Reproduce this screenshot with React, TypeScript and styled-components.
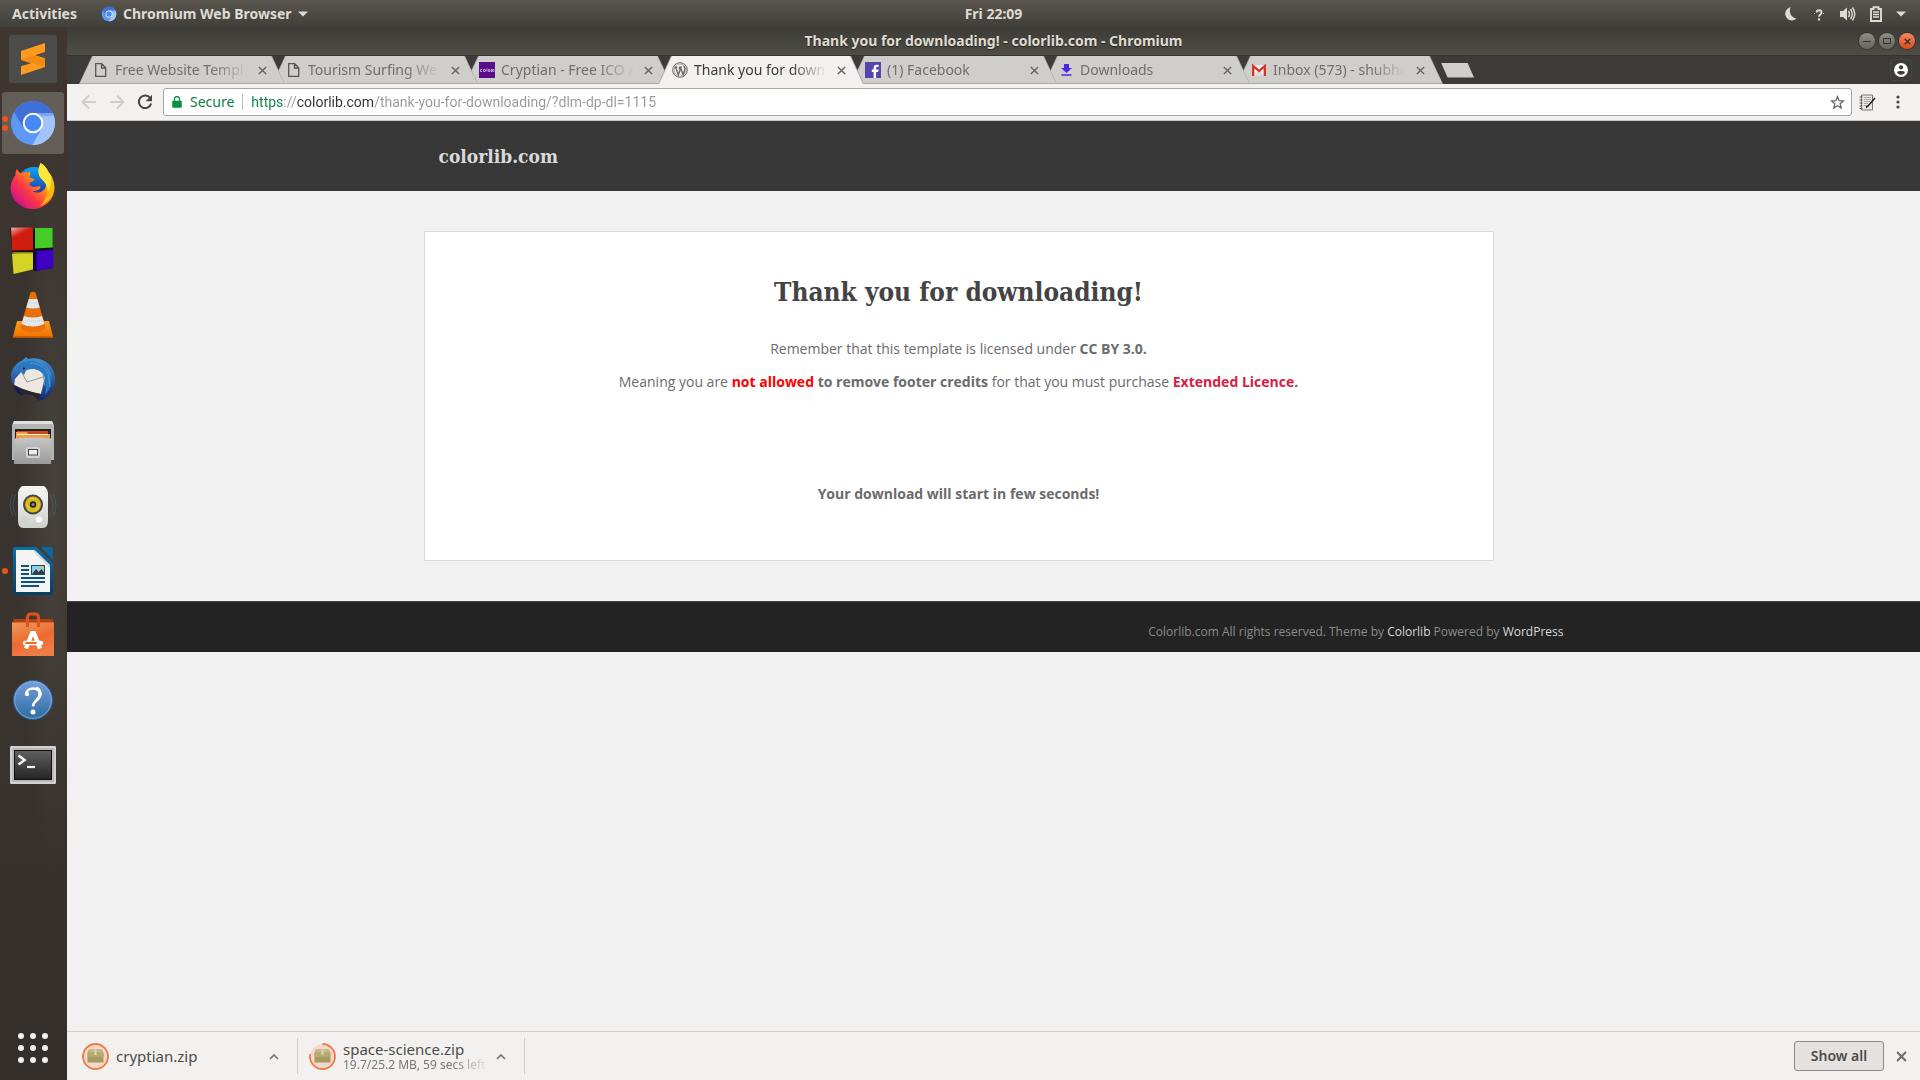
import React from "react";
import styled, { createGlobalStyle } from "styled-components";

const ui = `"Noto Sans", "Open Sans", "DejaVu Sans", sans-serif`;
const body = `"Open Sans", "Noto Sans", sans-serif`;
const slab = `"Roboto Slab", "DejaVu Serif Condensed", "DejaVu Serif", serif`;

const GlobalStyle = createGlobalStyle`
  * { box-sizing: border-box; }
  body { margin: 0; background: #f1f1f1; font-family: ${ui}; }
  button { font: inherit; color: inherit; padding: 0; border: 0; background: none; cursor: pointer; }
  a { text-decoration: none; }
  svg { display: block; flex: none; }
`;

const Desktop = styled.div`
  display: flex;
  flex-direction: column;
  min-height: 100vh;
`;

/* ---------- top panel ---------- */
const Panel = styled.header`
  display: grid;
  grid-template-columns: 1fr auto 1fr;
  align-items: center;
  height: 27px;
  padding-left: 67px;
  background: linear-gradient(#5a564e, #403f3a);
  color: #dfdbd2;
  font-size: 14px;
  font-weight: 700;
  line-height: 20px;
  text-shadow: 0 1px 1px rgba(0, 0, 0, 0.5);
`;
const PanelLeft = styled.div`
  display: flex;
  align-items: center;
  gap: 24px;
  margin-left: -55px;
`;
const PanelButton = styled.button`
  display: flex;
  align-items: center;
  gap: 6px;
  white-space: nowrap;
`;
const PanelRight = styled.div`
  display: flex;
  align-items: center;
  justify-content: flex-end;
  gap: 12px;
  margin-right: 14px;
`;

/* ---------- dock ---------- */
const Workspace = styled.div`
  display: flex;
  flex: 1;
`;
const Dock = styled.nav`
  display: flex;
  flex-direction: column;
  flex: none;
  width: 67px;
  background:
    radial-gradient(ellipse at 80% 45%, rgba(110, 110, 95, 0.25), transparent 45%),
    linear-gradient(#40362f, #38332f 30%, #3a342f 60%, #342f2b);
`;
const DockItem = styled.button<{ $active?: boolean }>`
  display: flex;
  align-items: center;
  height: 62px;
  width: 62px;
  margin: 1px 2px;
  padding: 0 0 0 7px;
  border-radius: 3px;
  position: relative;
  background: ${(p) => (p.$active ? "rgba(255,255,255,0.2)" : "none")};
`;
const AppsButton = styled(DockItem)`
  margin-top: auto;
`;
const Dots = styled.span`
  position: absolute;
  left: 0;
  top: 0;
  height: 100%;
  display: flex;
  flex-direction: column;
  justify-content: center;
  gap: 3px;
`;
const Dot = styled.span`
  width: 6px;
  height: 6px;
  border-radius: 50%;
  background: #e95420;
`;

/* ---------- browser window ---------- */
const Window = styled.div`
  display: flex;
  flex-direction: column;
  flex: 1;
  min-width: 0;
`;
const TitleBar = styled.div`
  display: grid;
  grid-template-columns: 1fr auto 1fr;
  align-items: center;
  height: 28px;
  padding: 0 5px;
  background: linear-gradient(#3c3b37, #504d46);
  color: #dfdbd2;
  font-size: 14px;
  font-weight: 700;
  line-height: 20px;
`;
const WindowTitle = styled.span`
  grid-column: 2;
  text-shadow: 0 1px 1px rgba(0, 0, 0, 0.5);
`;
const WindowControls = styled.div`
  display: flex;
  justify-content: flex-end;
  gap: 4px;
`;
const Control = styled.button<{ $close?: boolean }>`
  display: grid;
  place-items: center;
  width: 16px;
  height: 16px;
  border-radius: 50%;
  background: ${(p) => (p.$close ? "linear-gradient(#f58a64, #de4815)" : "linear-gradient(#8f8d86, #66645d)")};
  box-shadow: 0 0 0 1px rgba(40, 38, 34, 0.5);
  color: #33322e;
`;
const TabStrip = styled.div`
  display: flex;
  align-items: flex-end;
  height: 29px;
  padding: 0 8px 0 12px;
  background: #3c3b37;
  border-top: 1px solid #33322e;
`;
const TabBox = styled.div<{ $active?: boolean; $order: number }>`
  position: relative;
  z-index: ${(p) => (p.$active ? 20 : p.$order)};
  display: flex;
  align-items: center;
  flex: 0 1 206px;
  min-width: 0;
  height: 28px;
  margin-right: -13px;
  padding: 0 15px 0 14px;
  isolation: isolate;
  color: ${(p) => (p.$active ? "#3c3b37" : "#6f6e6b")};
  &::before, &::after {
    content: "";
    position: absolute;
    z-index: -1;
    inset: 0;
    clip-path: polygon(13px 0, calc(100% - 13px) 0, 100% 100%, 0 100%);
    background: #aba9a6;
  }
  &::after {
    inset: 0 1px ${(p) => (p.$active ? "0" : "1px")} 1px;
    background: ${(p) => (p.$active ? "#f2f1ef" : "#d0cecb")};
  }
`;
const TabTitle = styled.button`
  display: flex;
  align-items: center;
  gap: 6px;
  flex: 1;
  min-width: 0;
  font-size: 14px;
  line-height: 20px;
  text-align: left;
`;
const FadeText = styled.span`
  flex: 1;
  min-width: 0;
  overflow: hidden;
  white-space: nowrap;
  mask-image: linear-gradient(to right, #000 calc(100% - 36px), transparent);
`;
const TabClose = styled.button`
  display: grid;
  place-items: center;
  width: 16px;
  height: 16px;
  margin: 0 0 0 6px;
`;
const NewTab = styled.button`
  align-self: center;
  width: 33px;
  height: 15px;
  margin: 0 0 0 11px;
  background: #d0cecb;
  clip-path: polygon(0 0, 80% 0, 100% 100%, 20% 100%);
`;
const Profile = styled.button`
  align-self: center;
  display: grid;
  place-items: center;
  width: 22px;
  height: 22px;
  margin-left: auto;
  border: 1px solid #46453f;
  border-radius: 4px;
`;
const Toolbar = styled.div`
  display: flex;
  align-items: center;
  height: 37px;
  padding: 0 14px;
  background: #f2f1ef;
  border-bottom: 1px solid #c9c8c6;
`;
const NavButtons = styled.div`
  display: flex;
  gap: 12px;
  margin-right: 10px;
`;
const Omnibox = styled.form`
  display: flex;
  align-items: center;
  flex: 1;
  height: 28px;
  padding: 0 6px 0 8px;
  background: #fff;
  border: 1px solid #a9a7a4;
  border-radius: 3px;
  font-size: 14px;
  line-height: 20px;
`;
const Secure = styled.button`
  display: flex;
  align-items: center;
  gap: 8px;
  padding-right: 8px;
  border-right: 1px solid #bbb;
  line-height: 16px;
  color: #0b8043;
`;
const Address = styled.input`
  flex: 1;
  min-width: 0;
  margin-left: 8px;
  padding: 0;
  border: 0;
  outline: 0;
  font: 14px/20px Roboto, ${ui};
  -webkit-text-fill-color: transparent;
  background: linear-gradient(to right, #0b8043 0 32px, #999 32px 46px, #33322e 46px 124px, #999 124px);
  background-clip: text;
  -webkit-background-clip: text;
`;
const ToolbarActions = styled.div`
  display: flex;
  align-items: center;
  gap: 14px;
  margin-left: 7px;
`;

/* ---------- web page ---------- */
const Page = styled.main`
  flex: 1;
  background: #f1f1f1;
  font-family: ${body};
`;
const Container = styled.div`
  width: 100%;
  max-width: 1170px;
  margin: 0 auto;
  padding: 0 15px;
`;
const SiteHeader = styled.div`
  padding: 20px 0;
  background: #383838;
`;
const Brand = styled.a`
  display: block;
  padding-left: 15px;
  color: #dadada;
  font: bold 19px/30px ${slab};
`;
const Card = styled.article`
  max-width: 1070px;
  margin: 40px 0;
  padding: 40px 50px 49px;
  background: #fff;
  border: 1px solid #dadada;
  color: #6b6b6b;
  font-size: 14px;
  line-height: 23px;
  text-align: center;
`;
const Heading = styled.h1`
  margin: 0 0 25px;
  color: #444;
  font: bold 26px/40px ${slab};
`;
const Line = styled.p`
  margin: 0 0 10px;
`;
const Notice = styled(Line)`
  margin: 89px 0 6px;
  font-weight: 700;
`;
const Denied = styled.span`
  color: #ff0000;
`;
const Licence = styled.a`
  color: #da1b43;
`;
const SiteFooter = styled.footer`
  padding: 19px 0 9px;
  background: #232323;
  border-top: 1px solid #444;
  color: #8c8c8c;
  font-size: 12px;
  line-height: 22px;
  text-align: right;
`;
const FooterLink = styled.a`
  color: #dadada;
`;

/* ---------- download shelf ---------- */
const Shelf = styled.aside`
  display: flex;
  align-items: center;
  height: 49px;
  padding: 0 13px 0 15px;
  background: #f2f1ef;
  border-top: 1px solid #cfcecc;
  color: #4c4c4c;
`;
const Download = styled.div`
  display: flex;
  align-items: center;
  gap: 7px;
  width: 216px;
  height: 36px;
  margin-right: 11px;
  padding-right: 18px;
  border-right: 1px solid #cfcecc;
`;
const FileInfo = styled.div`
  flex: 1;
  min-width: 0;
  font-size: 15px;
  line-height: 18px;
`;
const FileStatus = styled.div`
  display: flex;
  color: #777;
  font-size: 12px;
  line-height: 14px;
`;
const ShowAll = styled.button`
  width: 90px;
  height: 30px;
  margin: 0 12px 0 auto;
  border: 1px solid #8b8986;
  border-radius: 3px;
  background: #e3e2e0;
  font-size: 14px;
  font-weight: 600;
  line-height: 20px;
`;

/* ---------- small icons ---------- */
const Caret = () => (
  <svg width="10" height="6" viewBox="0 0 10 6"><path d="M0 .5h10L5 5.500z" fill="#dfdbd2" /></svg>
);
const Cross = ({ size = 9, color = "#666", w = 1.6 }: { size?: number; color?: string; w?: number }) => (
  <svg width={size} height={size} viewBox="0 0 10 10"><path d="M1 1l8 8M9 1L1 9" stroke={color} strokeWidth={w} /></svg>
);
const ChromiumIcon = ({ size }: { size: number }) => (
  <svg width={size} height={size} viewBox="0 0 48 48">
    <circle cx="24" cy="24" r="22" fill="#5e97f6" />
    <path d="M5 13A22 22 0 0 1 43 13L43.500 14H24L14.500 29z" fill="#3f70d8" />
    <path d="M24 14H43.600A22 22 0 0 1 23.500 46L33 29z" fill="#a3c4fb" />
    <path d="M24 14h19.600l1 2.500L30 18z" fill="#7ba6ee" />
    <circle cx="24" cy="24" r="10.300" fill="#fff" />
    <circle cx="24" cy="24" r="8.300" fill="#4688f4" />
  </svg>
);
const PageIcon = () => (
  <svg width="16" height="16" viewBox="0 0 16 16"><path d="M2.700 1.700h6l4 4v8.600h-10zM8.500 1.700V6h4.200" fill="none" stroke="#555" strokeWidth="1.300" /></svg>
);
const ColorlibIcon = () => (
  <svg width="16" height="16" viewBox="0 0 16 16">
    <rect width="16" height="16" fill="#5b0e8b" />
    <path d="M3 7.500H1.500v2H3M4.500 7.500h2v2h-2zM8 6.500v3M9.500 7.500H11v2H9.500zM12.500 7v3M13.500 7.500h1.500v2h-1.500z" stroke="#d3b8e2" strokeWidth=".8" fill="none" />
  </svg>
);
const WordPressIcon = () => (
  <svg width="16" height="16" viewBox="0 0 16 16" fill="none" stroke="#6a6a6a">
    <circle cx="8" cy="8" r="7.300" />
    <circle cx="8" cy="8" r="6" strokeWidth=".5" />
    <path d="M2.600 5.200h2.600M6.800 5.200h3M3.600 5.200l2.700 7.500L8.100 8 7.200 5.200M8.400 5.200l2.700 7.500 1.800-5.200c.5-1.700-.8-2.400-1.300-3.600" strokeWidth="1.400" />
  </svg>
);
const FacebookIcon = () => (
  <svg width="16" height="16" viewBox="0 0 16 16"><rect width="16" height="16" fill="#5545ae" /><path d="M8.600 16V10H6.800V7.600h1.800V6c0-2.200 1.200-3.200 3-3.200h2V5h-1.300c-.9 0-1.200.4-1.200 1.200v1.400h2.500L13.200 10h-2.100v6z" fill="#fff" /></svg>
);
const DownloadIcon = () => (
  <svg width="16" height="16" viewBox="0 0 16 16"><path d="M6 2h5v4h3L8.500 11 3 6h3zM3.500 12.300h10v1.400h-10z" fill="#4a26e8" /></svg>
);
const GmailIcon = () => (
  <svg width="16" height="16" viewBox="0 0 16 16"><path d="M1 3h14v11H1z" fill="#f3f1ef" /><path d="M3 14l5-5 5 5z" fill="#dddad8" /><path d="M2.200 14V4L8 9l5.800-5v10" fill="none" stroke="#d93025" strokeWidth="2.300" /></svg>
);
const ArrowIcon = ({ flip }: { flip?: boolean }) => (
  <svg width="16" height="16" viewBox="0 0 16 16"><path d={flip ? "M1 8h13M8 1.500L14.500 8 8 14.500" : "M15 8H2M8 1.500L1.500 8 8 14.500"} fill="none" stroke="#cfcdca" strokeWidth="1.900" /></svg>
);
const ReloadIcon = () => (
  <svg width="16" height="16" viewBox="0 0 16 16"><path d="M13.200 4A6.300 6.300 0 1 0 14.200 9.500" fill="none" stroke="#454545" strokeWidth="2" /><path d="M15 .8v6.400H8.700z" fill="#454545" /></svg>
);
const LockIcon = () => (
  <svg width="10" height="12" viewBox="0 0 10 12"><path d="M1 4.700h8a.8.8 0 0 1 .8.800V11a.8.8 0 0 1-.8.800H1a.8.8 0 0 1-.8-.8V5.500A.8.8 0 0 1 1 4.700z" fill="#0b9043" /><path d="M2.500 5V3a2.500 2.500 0 0 1 5 0v2" fill="none" stroke="#0b9043" strokeWidth="1.300" /></svg>
);
const StarIcon = () => (
  <svg width="15" height="15" viewBox="0 0 16 16"><path d="M8 1.800l1.700 4.300 4.700.3-3.600 3 1.200 4.500-4-2.500-4 2.500 1.200-4.500-3.600-3 4.700-.3z" fill="none" stroke="#666" strokeWidth="1.400" /></svg>
);
const NotebookIcon = () => (
  <svg width="17" height="17" viewBox="0 0 17 17">
    <path d="M2.500 1h11v15h-11z" fill="#e9e8e5" stroke="#777" />
    <path d="M5 3.500h7M5 5.500h7M5 7.500h6M5 9.500h4M5 11.500h3" stroke="#a8a8a8" />
    <path d="M.5 3h3M.5 6h3M.5 9h3M.5 12h3M.5 14.500h3" stroke="#555" />
    <path d="M16 4L9 12l-2 1.500" stroke="#222" strokeWidth="1.600" fill="none" />
  </svg>
);
const MenuIcon = () => (
  <svg width="16" height="16" viewBox="0 0 16 16" fill="#454545"><circle cx="8" cy="3" r="1.600" /><circle cx="8" cy="8" r="1.600" /><circle cx="8" cy="13" r="1.600" /></svg>
);
const ProfileIcon = () => (
  <svg width="14" height="14" viewBox="0 0 14 14"><circle cx="7" cy="7" r="7" fill="#fff" /><circle cx="7" cy="4.300" r="2.100" fill="#3c3b37" /><path d="M3 9.300c1-1.600 7-1.600 8 0-.8 1.700-2.300 2.500-4 2.500s-3.200-.8-4-2.500z" fill="#3c3b37" /></svg>
);
const Chevron = () => (
  <svg width="10" height="7" viewBox="0 0 10 7"><path d="M1 6l4-4 4 4" fill="none" stroke="#777" strokeWidth="1.700" /></svg>
);
const ArchiveIcon = ({ partial }: { partial?: boolean }) => (
  <svg width="27" height="27" viewBox="0 0 27 27">
    <circle cx="13.500" cy="13.500" r="12.500" fill="#f3d8cb" />
    <circle cx="13.500" cy="13.500" r="12.500" fill="none" stroke="#f27a45" strokeWidth="1.800" strokeDasharray={partial ? "61 79" : undefined} transform="rotate(-90 13.500 13.500)" />
    <path d="M7 6.500h13l1.500 3.500v9.500h-16V10z" fill="#a99a62" />
    <path d="M7 6.500h13l1 3H6z" fill="#c6b983" />
    <path d="M5.500 10h16v4h-16z" fill="#b8aa72" />
    <path d="M12.500 6.500h2V12h-2z" fill="#ded6ae" />
  </svg>
);

/* ---------- launcher icons ---------- */
const Icon = ({ children }: { children: React.ReactNode }) => (
  <svg width="48" height="48" viewBox="0 0 48 48">{children}</svg>
);
const Gradient = ({ id, from, to }: { id: string; from: string; to: string }) => (
  <linearGradient id={id} x1="0" y1="0" x2="0" y2="1"><stop stopColor={from} /><stop offset="1" stopColor={to} /></linearGradient>
);
const Sublime = () => (
  <Icon>
    <rect width="48" height="48" rx="2.500" fill="#4b4b4a" />
    <path d="M36 8L12 16v9l10 3.300L12 31.300V40l24-8v-8.700l-10-3.100L36 17z" fill="#ff9a20" />
    <path d="M12 24.500l24 7.500v-8.500l-10-3.300z" fill="#f58a10" />
  </Icon>
);
const Firefox = () => (
  <Icon>
    <defs>
      <linearGradient id="fx1" x1=".9" y1=".1" x2=".1" y2=".9"><stop stopColor="#ffe226" /><stop offset=".35" stopColor="#ff9a0e" /><stop offset=".65" stopColor="#ff3647" /><stop offset="1" stopColor="#c4108f" /></linearGradient>
      <Gradient id="fx2" from="#0aa5f5" to="#2a1a8c" />
    </defs>
    <circle cx="25" cy="21" r="17" fill="url(#fx2)" />
    <path d="M8 6c1 2 2 3 3.500 4 3-1 5-1 7-.5 2-.8 3-1 3-1l-1 6 5 1.500c0 2-4 3-5 4-1 2 2 4 5 4s4-1 6-.5c0 3-4 5-8 4.500 6 4 14 0 14-8 0-7-5-9-7-12 0-3 0-5 1-8 4 2 6 5 8 9 3 3 6 9 6 16a22 21 0 0 1-44 0C2 19 4 15 6.500 12 6 10 7 8 8 6z" fill="url(#fx1)" />
    <path d="M31.500 0c4 2 6 5 8 9 4 6 4 14-1 20 0-7-3-10-6-13-4-4-4-10-1-16z" fill="#ffe63a" />
    <path d="M39 29c3-4 4-9 3-14 2 3 3 6 3 10-1 9-6 15-14 18 4-4 6-8 8-14z" fill="#ffb412" />
  </Icon>
);
const Cubes = () => (
  <Icon>
    <defs><linearGradient id="cb" x2=".5" y2="1"><stop stopColor="#f7b0aa" /><stop offset=".4" stopColor="#cf1d10" /></linearGradient></defs>
    <path d="M1 1l2 23 2 22 19-3 3 1 17-3V2H26L2 0z" fill="#111" />
    <path d="M2 .5h22V23L3 23.500z" fill="url(#cb)" />
    <path d="M26 1h17.700v19.500L26 21.500z" fill="#46cc26" />
    <path d="M3 26.500l21-1.500v17.500L4.500 47z" fill="#d4d326" />
    <path d="M3 26.500l1-1.500h20v1.500z" fill="#85851a" />
    <path d="M28 24l16.300-1.500V41L28 44z" fill="#4000c4" />
    <path d="M25 23l3 1v20l-3-2z" fill="#1d0060" />
  </Icon>
);
const Vlc = () => (
  <Icon>
    <defs><Gradient id="vl" from="#ff9a20" to="#f07400" /></defs>
    <path d="M8 30h32l4 15.500H4z" fill="url(#vl)" />
    <path d="M4 45h40v1.700H4z" fill="#d65c00" />
    <path d="M21.500 1.500q2.500-1.500 5 0L36.500 36q0 5-12.500 5t-12.500-5z" fill="#e96f06" />
    <path d="M19.800 8h8.400l2.500 8.500q-6.700 2-13.400 0zM15 25q9 3 18 0l2.500 8q-11.500 5-23 0z" fill="#e4e6ea" />
    <path d="M18.500 12h11M14 30h20" stroke="#c6cad0" strokeDasharray="1 1" />
  </Icon>
);
const Thunderbird = () => (
  <Icon>
    <defs><Gradient id="tb" from="#3d94d8" to="#15256f" /></defs>
    <g transform="translate(0 1)">
      <path d="M14 4l3-3 2 2c12-3 25 4 27 17 1 12-5 20-13 24l-5 1 2-4-18-4c-5-3-10-9-10-17C2 13 7 7 14 4z" fill="url(#tb)" />
      <path d="M6 23l8-9 9-3c8-2 16 5 12 14l-3 13c-10-1-19-3-27-8z" fill="#ece7e0" />
      <path d="M13 17l5 9 16-5" fill="none" stroke="#9b948c" strokeWidth="1" />
      <path d="M10 14c-2-5 2-8 7-8 9-2 20 0 24 9 3 8 1 18-5 24 1-6 2-13-1-19-4-7-11-8-17-6-2 1-2 4-3 5z" fill="#2a77bf" />
      <path d="M21 7c8 0 15 4 18 11M26 5c8 2 14 7 16 15M34 17l2 13M39 17l2 14" fill="none" stroke="#4b9bd8" strokeWidth="1" />
      <path d="M4 28c3 2 13 7 28 10l-3 6-5-5-9-1-2 1c-4-2-8-6-9-11z" fill="#2a2626" />
      <path d="M4 28c2 3 5 5 8 6v5c-4-2-7-6-8-11z" fill="#171760" />
      <circle cx="15" cy="12.500" r="1" fill="#200" />
    </g>
  </Icon>
);
const Files = () => (
  <Icon>
    <defs><Gradient id="fl" from="#c5c5c5" to="#9b9b9b" /></defs>
    <path d="M5 2h38l2 4v35H3V6z" fill="#b4b4b4" />
    <path d="M5 2h38l1 3H4z" fill="#e0e0e0" />
    <path d="M6 10h36v10H6z" fill="#222" />
    <path d="M8 12h31v8H8z" fill="#c9481a" />
    <path d="M7 13h11l1 2h22v5H7z" fill="#f39a45" />
    <path d="M8 15.500h31" stroke="#fff3da" strokeWidth="1" />
    <path d="M6 19.500q18-2 37 0l-1 25.500H5z" fill="url(#fl)" />
    <rect x="17" y="28" width="14" height="11" rx="2" fill="#d2d2d2" />
    <rect x="19.500" y="30.500" width="9" height="5.500" fill="#eee" stroke="#444" />
  </Icon>
);
const Speaker = () => (
  <Icon>
    <defs><Gradient id="sp" from="#f6f6f5" to="#cfcfcc" /></defs>
    <path d="M4 11q-6 11 0 22M7 11q-6 11 0 22M41 11q6 11 0 22M44 11q6 11 0 22" fill="none" stroke="#526a86" strokeWidth="1" opacity=".5" />
    <path d="M13 3h22q4 3 4 8v26q0 8-5 8H14q-5 0-5-8V11q0-5 4-8z" fill="url(#sp)" />
    <circle cx="24" cy="21.500" r="10" fill="#444" />
    <circle cx="24" cy="21.500" r="8" fill="#d6b81d" />
    <circle cx="24" cy="21.500" r="6" fill="none" stroke="#e8d040" strokeDasharray="7 5" />
    <circle cx="24" cy="21.500" r="3.200" fill="#222" />
    <circle cx="24" cy="21.500" r="1.500" fill="#888" />
    <circle cx="30" cy="36.500" r="3.500" fill="#fff" stroke="#ccc" strokeWidth=".6" />
    <rect x="14" y="35" width="4" height="4" fill="none" stroke="#ccc" strokeWidth=".7" />
  </Icon>
);
const Writer = () => (
  <Icon>
    <defs><Gradient id="wr" from="#0870ac" to="#063f66" /></defs>
    <path d="M6.500 0H27l17 16v29.500q0 2.500-2.500 2.500h-35Q4 48 4 45.500v-43Q4 0 6.500 0z" fill="url(#wr)" />
    <path d="M32 0h10q2 0 2 2v11z" fill="#0868a2" />
    <path d="M7 3h18.500L41 18v27H7z" fill="#f4f4f4" />
    <path d="M25.500 3L41 18v3L24 4z" fill="#cfd6da" />
    <path d="M12 19h8M12 23h8M12 27h8M12 31h24M12 35h24M12 39h18" stroke="#0a5384" strokeWidth="2" />
    <rect x="22.500" y="18.500" width="13" height="9" fill="#8fcdf0" stroke="#0a5384" />
    <path d="M23 27l4-5 2.500 3 3-3 3 4v1z" fill="#3b3b3b" />
    <circle cx="33.500" cy="20.500" r="1.500" fill="#f2c230" />
  </Icon>
);
const Software = () => (
  <Icon>
    <defs><linearGradient id="so" x2=".4" y2="1"><stop stopColor="#eb9a58" /><stop offset=".6" stopColor="#ee6a31" /><stop offset="1" stopColor="#f07c46" /></linearGradient></defs>
    <path d="M5 8h38l2 4H3z" fill="#b8400f" />
    <path d="M3 11.500h42V45H3z" fill="url(#so)" />
    <path d="M18.500 16V7q0-4 3-4h5q3 0 3 4v9" fill="none" stroke="#da5424" strokeWidth="3" />
    <path d="M17 37.500L23 22h2l6 15.500" fill="none" stroke="#fff" strokeWidth="4.200" />
    <path d="M16 32h16" stroke="#fff" strokeWidth="4.600" strokeLinecap="round" />
    <path d="M17 32h10" stroke="#ee6c24" strokeWidth="1.800" strokeLinecap="round" />
  </Icon>
);
const Help = () => (
  <Icon>
    <defs><Gradient id="hp" from="#789fdc" to="#2d6b9f" /></defs>
    <circle cx="24" cy="25" r="19.500" fill="url(#hp)" stroke="#2c6193" />
    <circle cx="24" cy="25" r="18.300" fill="none" stroke="#8cb3e2" strokeWidth=".8" />
    <path d="M17 19.500c0-8 14.500-8 14.500-.5 0 6-7.500 6-7.500 12.500" fill="none" stroke="#fff" strokeWidth="2.600" />
    <path d="M27 13c5 2 5 8 1 11.500" fill="none" stroke="#fff" strokeWidth="3" />
    <circle cx="18" cy="19" r="2.200" fill="#fff" />
    <circle cx="24" cy="37" r="2.500" fill="#fff" />
  </Icon>
);
const Terminal = () => (
  <Icon>
    <defs><Gradient id="te" from="#606060" to="#252525" /></defs>
    <rect x="1" y="7" width="46" height="38" rx="1.500" fill="#b9b9b9" />
    <rect x="2" y="8" width="44" height="36" fill="none" stroke="#e8e8e8" />
    <rect x="5" y="11" width="38" height="30" fill="#111" />
    <rect x="6" y="12" width="36" height="28" fill="url(#te)" />
    <path d="M9.500 16.500l6 4.500-6 4.500" fill="none" stroke="#f2f2f2" strokeWidth="2.600" />
    <path d="M18 28h8" stroke="#f2f2f2" strokeWidth="2.200" />
  </Icon>
);
const AppsGrid = () => (
  <Icon>
    {[12, 24, 36].map((y) => [12, 24, 36].map((x) => <circle key={`${x}-${y}`} cx={x} cy={y} r="3" fill="#f2f1ef" />))}
  </Icon>
);

const launchers = [
  { name: "Sublime Text", icon: <Sublime />, running: 0 },
  { name: "Chromium Web Browser", icon: <ChromiumIcon size={48} />, running: 2, active: true },
  { name: "Firefox Web Browser", icon: <Firefox />, running: 0 },
  { name: "Code::Blocks IDE", icon: <Cubes />, running: 0 },
  { name: "VLC media player", icon: <Vlc />, running: 0 },
  { name: "Thunderbird Mail", icon: <Thunderbird />, running: 0 },
  { name: "Files", icon: <Files />, running: 0 },
  { name: "Rhythmbox", icon: <Speaker />, running: 0 },
  { name: "LibreOffice Writer", icon: <Writer />, running: 1 },
  { name: "Ubuntu Software", icon: <Software />, running: 0 },
  { name: "Help", icon: <Help />, running: 0 },
  { name: "Terminal", icon: <Terminal />, running: 0 },
];

const tabs = [
  { title: "Free Website Templ", icon: <PageIcon /> },
  { title: "Tourism Surfing We", icon: <PageIcon /> },
  { title: "Cryptian - Free ICO A", icon: <ColorlibIcon /> },
  { title: "Thank you for down", icon: <WordPressIcon />, active: true },
  { title: "(1) Facebook", icon: <FacebookIcon /> },
  { title: "Downloads", icon: <DownloadIcon /> },
  { title: "Inbox (573) - shubha", icon: <GmailIcon /> },
];

export default function App() {
  return (
    <Desktop>
      <GlobalStyle />
      <Panel>
        <PanelLeft>
          <PanelButton>Activities</PanelButton>
          <PanelButton><ChromiumIcon size={16} />Chromium Web Browser<Caret /></PanelButton>
        </PanelLeft>
        <PanelButton>Fri 22:09</PanelButton>
        <PanelRight>
          <svg width="16" height="16" viewBox="0 0 16 16"><path d="M7.500 1C3.500 2.500 1.500 6 2.500 9.500 4 14.500 9.500 16 13.500 12.500 8.500 12 5.500 6.500 7.500 1z" fill="#dfdbd2" /></svg>
          <svg width="16" height="16" viewBox="0 0 16 16" fill="none" stroke="#dfdbd2"><path d="M5.700 6.500c0-3 4.800-3 4.800 0 0 2-2.500 2-2.500 4.300" strokeWidth="1.900" /><path d="M8 12.300v2.200" strokeWidth="2.200" /><path d="M3 7.500h1M12 7.500h1" /></svg>
          <svg width="17" height="16" viewBox="0 0 17 16" fill="none" stroke="#dfdbd2"><path d="M1 5h3l4-3.500v13L4 11H1z" fill="#dfdbd2" stroke="none" /><path d="M9.500 5q2 3 0 6M11.500 3q3.500 5 0 10M13.500 1.500q4.500 6.500 0 13" strokeWidth="1.400" /></svg>
          <svg width="16" height="16" viewBox="0 0 16 16" fill="none" stroke="#dfdbd2"><path d="M3 3h2.500V1.300h5V3H13v12H3z" strokeWidth="1.900" /><path d="M5 6h6M5 8.500h6M5 11h6" strokeWidth="1.300" /></svg>
          <Caret />
        </PanelRight>
      </Panel>
      <Workspace>
        <Dock aria-label="Dock">
          {launchers.map((l) => (
            <DockItem key={l.name} aria-label={l.name} $active={l.active}>
              {l.running > 0 && <Dots>{Array.from({ length: l.running }, (_, i) => <Dot key={i} />)}</Dots>}
              {l.icon}
            </DockItem>
          ))}
          <AppsButton aria-label="Show Applications"><AppsGrid /></AppsButton>
        </Dock>
        <Window>
          <TitleBar>
            <WindowTitle>Thank you for downloading! - colorlib.com - Chromium</WindowTitle>
            <WindowControls>
              <Control aria-label="Minimize"><svg width="8" height="8" viewBox="0 0 8 8"><path d="M0 4.500h8" stroke="currentColor" /></svg></Control>
              <Control aria-label="Maximize"><svg width="8" height="8" viewBox="0 0 8 8"><path d="M.5 1.500h7v5h-7z" fill="none" stroke="currentColor" /></svg></Control>
              <Control aria-label="Close" $close><Cross size={7} color="#33322e" w={2} /></Control>
            </WindowControls>
          </TitleBar>
          <TabStrip>
            {tabs.map((t, i) => (
              <TabBox key={t.title} $active={t.active} $order={tabs.length - i}>
                <TabTitle>{t.icon}<FadeText>{t.title}</FadeText></TabTitle>
                <TabClose aria-label={`Close ${t.title}`}><Cross /></TabClose>
              </TabBox>
            ))}
            <NewTab aria-label="New tab" />
            <Profile aria-label="Profile"><ProfileIcon /></Profile>
          </TabStrip>
          <Toolbar>
            <NavButtons>
              <button aria-label="Back"><ArrowIcon /></button>
              <button aria-label="Forward"><ArrowIcon flip /></button>
              <button aria-label="Reload"><ReloadIcon /></button>
            </NavButtons>
            <Omnibox onSubmit={(e) => e.preventDefault()}>
              <Secure type="button"><LockIcon />Secure</Secure>
              <Address aria-label="Address" defaultValue="https://colorlib.com/thank-you-for-downloading/?dlm-dp-dl=1115" />
              <button type="button" aria-label="Bookmark this page"><StarIcon /></button>
            </Omnibox>
            <ToolbarActions>
              <button aria-label="Notes"><NotebookIcon /></button>
              <button aria-label="Menu"><MenuIcon /></button>
            </ToolbarActions>
          </Toolbar>
          <Page>
            <SiteHeader>
              <Container><Brand href="#">colorlib.com</Brand></Container>
            </SiteHeader>
            <Container>
              <Card>
                <Heading>Thank you for downloading!</Heading>
                <Line>Remember that this template is licensed under <strong>CC BY 3.0.</strong></Line>
                <Line>
                  Meaning you are <strong><Denied>not allowed</Denied> to remove footer credits</strong> for that you must purchase{" "}
                  <strong><Licence href="#">Extended Licence</Licence>.</strong>
                </Line>
                <Notice>Your download will start in few seconds!</Notice>
              </Card>
            </Container>
            <SiteFooter>
              <Container>
                Colorlib.com All rights reserved. Theme by <FooterLink href="#">Colorlib</FooterLink> Powered by <FooterLink href="#">WordPress</FooterLink>
              </Container>
            </SiteFooter>
          </Page>
          <Shelf>
            <Download>
              <ArchiveIcon />
              <FileInfo>cryptian.zip</FileInfo>
              <button aria-label="Options for cryptian.zip"><Chevron /></button>
            </Download>
            <Download>
              <ArchiveIcon partial />
              <FileInfo>
                space-science.zip
                <FileStatus><FadeText>19.7/25.2 MB, 59 secs left</FadeText></FileStatus>
              </FileInfo>
              <button aria-label="Options for space-science.zip"><Chevron /></button>
            </Download>
            <ShowAll>Show all</ShowAll>
            <button aria-label="Close downloads bar"><Cross size={11} color="#6f6e6b" w={1.9} /></button>
          </Shelf>
        </Window>
      </Workspace>
    </Desktop>
  );
}
